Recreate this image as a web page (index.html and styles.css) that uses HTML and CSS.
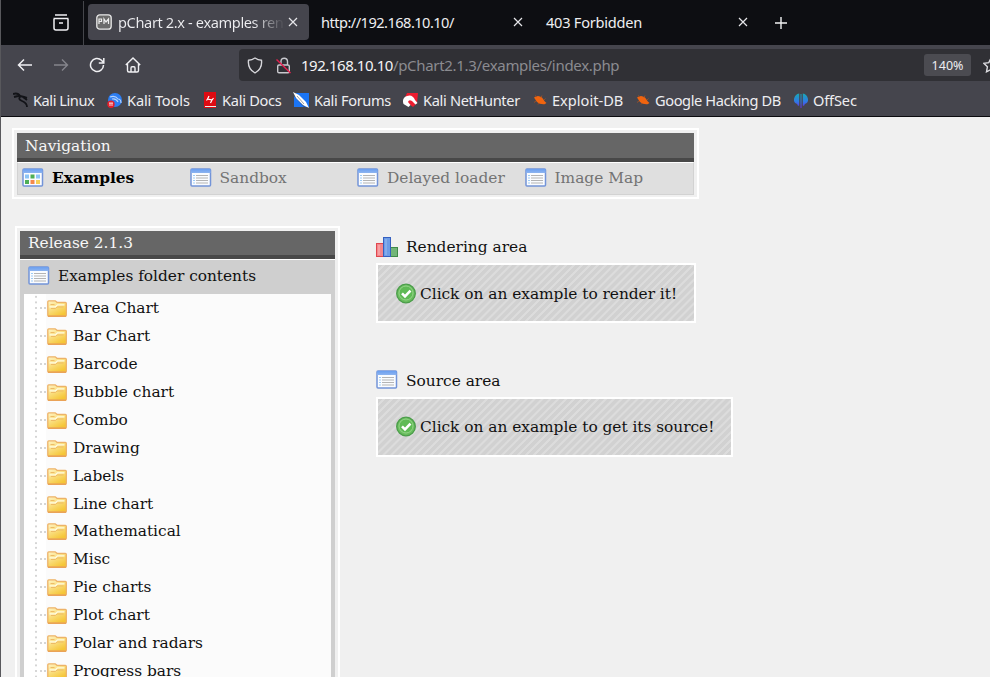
FILE: index.html
```html
<!DOCTYPE html>
<html lang="en">
<head>
<meta charset="utf-8">
<title>pChart 2.x - examples rendering</title>
<link rel="stylesheet" href="styles.css">
</head>
<body>
<svg class="defs" width="0" height="0">
  <linearGradient id="gold" x1="0" y1="0" x2="0.6" y2="1"><stop offset="0" stop-color="#fff6c8"/><stop offset="1" stop-color="#f5c636"/></linearGradient>
  <linearGradient id="brain" x1="0" y1="0" x2="0" y2="1"><stop offset="0" stop-color="#18a8b4"/><stop offset=".55" stop-color="#2f7be4"/><stop offset="1" stop-color="#6a2be8"/></linearGradient>
  <linearGradient id="blue" x1="0" y1="0" x2="0" y2="1"><stop offset="0" stop-color="#6b9ff0"/><stop offset="1" stop-color="#8db4f0"/></linearGradient>
  <symbol id="close" viewBox="0 0 10 10"><path d="M1 1l8 8M9 1l-8 8" stroke="#e6e6ea" stroke-width="1.2" fill="none"/></symbol>
  <symbol id="list" viewBox="0 0 22 20">
    <rect x="1" y="1" width="19.500" height="17" rx="1" fill="#fafcff" stroke="#7394d8" stroke-width="1.500"/>
    <rect x="1" y="1" width="19.500" height="4" fill="url(#blue)"/>
    <path d="M3 7.500h2M3 10h2M3 12.500h2M3 15h2" stroke="#9dcbf5" stroke-width="1.200"/>
    <path d="M6 7.500h12M6 10h12M6 12.500h12M6 15h12" stroke="#b4b4b4" stroke-width="1.200"/>
  </symbol>
  <symbol id="grid" viewBox="0 0 22 20">
    <rect x="1" y="1" width="19.500" height="17" rx="1" fill="#fafcff" stroke="#7394d8" stroke-width="1.500"/>
    <rect x="1" y="1" width="19.500" height="4" fill="url(#blue)"/>
    <rect x="3" y="6.500" width="4" height="4" fill="#8cc4f6"/><rect x="8.500" y="6.500" width="4" height="4" fill="#4fae55"/><rect x="14" y="6.500" width="4" height="4" fill="#8cc4f6"/>
    <rect x="3" y="12" width="4" height="4" fill="#4fae55"/><rect x="8.500" y="12" width="4" height="4" fill="#f58a4c"/><rect x="14" y="12" width="4" height="4" fill="#f6cf55"/>
  </symbol>
  <symbol id="folder" viewBox="0 0 20 17">
    <path d="M.8 1.800q0-1 1-1h6.400l1.800 1.500h8.400q.9 0 .9 1v11.900q0 1-1 1H1.800q-1 0-1-1z" fill="url(#gold)" stroke="#edb268" stroke-width="1.300"/>
    <path d="M2.500 6.800h6l2-2h7" fill="none" stroke="#fffbe4" stroke-width="1.300"/>
    <path d="M3.500 4.500h4M4 8.500h4.500l1.500-1.500h6.500" fill="none" stroke="#eebb66" stroke-width="1"/>
    <path d="M1 16.200h18" stroke="#e99c4d" stroke-width="1.200"/>
  </symbol>
  <symbol id="ok" viewBox="0 0 20 21">
    <circle cx="10" cy="10.500" r="9.300" fill="#69bd5d" stroke="#4b9d4a" stroke-width="1.300"/>
    <circle cx="10" cy="10" r="7" fill="#5fba55" stroke="#93d488" stroke-width="1"/>
    <path d="M6 10.300l3 3 5.500-5.600" fill="none" stroke="#fff" stroke-width="2.600"/>
  </symbol>
  <symbol id="bug" viewBox="0 0 16 16"><path d="M2 5.500q4-3 8 0l2.800 4 1.700 1.500-2 1.200q-5 .3-7.500-2.200z" fill="#f0640f"/><path d="M5 5L3 3.500M9 5.500l1-2M4 9l-2 1.500M7 11l-1 1.500M12 8l1.500-1.500" stroke="#a9501f" stroke-width=".8"/></symbol>
</svg>
<div class="window">
  <header class="tabs">
    <div class="recent"><svg width="18" height="17" viewBox="0 0 18 17" fill="none" stroke="#f0f0f3" stroke-width="1.500"><path d="M3 1h12M1.500 4.500h15M2 5v9q0 2 2 2h10q2 0 2-2V5M7 9h4"/></svg></div>
    <div class="tab active">
      <svg class="fav" width="16" height="16" viewBox="0 0 16 16"><rect x=".8" y=".8" width="14.400" height="14.400" rx="3" fill="#6b6b6b" stroke="#e8e8e8" stroke-width="1.300"/><path d="M3 10V5h2.500v2.500H3M8 10V5l2 3 2.500-3v5" fill="none" stroke="#eee" stroke-width="1.200"/></svg>
      <span class="fade">pChart 2.x - examples ren</span>
      <svg class="x" width="10" height="10"><use href="#close"/></svg>
    </div>
    <div class="tab"><span class="host">http://192.168.10.10/</span><svg class="x" width="10" height="10"><use href="#close"/></svg></div>
    <div class="tab"><span class="err">403 Forbidden</span><svg class="x" width="10" height="10"><use href="#close"/></svg></div>
    <svg class="plus" width="12" height="12" viewBox="0 0 12 12"><path d="M6 0v12M0 6h12" stroke="#f2f2f4" stroke-width="1.400"/></svg>
  </header>
  <div class="toolbar">
    <div class="buttons">
      <svg width="16" height="16" viewBox="0 0 16 16" fill="none" stroke="#f0f0f3" stroke-width="1.500"><path d="M15 8H2M7 2.500L1.500 8 7 13.500"/></svg>
      <svg width="16" height="16" viewBox="0 0 16 16" fill="none" stroke="#85858c" stroke-width="1.400"><path d="M1 8h13M9 2.500L14.500 8 9 13.500"/></svg>
      <svg width="16" height="16" viewBox="0 0 16 16" fill="none" stroke="#f0f0f3" stroke-width="1.500"><path d="M14.500 8A6.500 6.500 0 1 1 12.500 3.300L14 5M14.800 1v5h-5"/></svg>
      <svg width="16" height="16" viewBox="0 0 16 16" fill="none" stroke="#f0f0f3" stroke-width="1.400"><path d="M.8 8L8 1l7.200 7M2.500 7v6.500q0 1.500 1.500 1.500h8q1.500 0 1.500-1.500V7M6 15v-4q0-1.200 1-1.200h2q1 0 1 1.200v4"/></svg>
    </div>
    <div class="url">
      <svg width="16" height="17" viewBox="0 0 16 17" fill="none" stroke="#d6d6da" stroke-width="1.400"><path d="M8 1Q11 3 14.500 3.300 15.500 12 8 16 .5 12 1.500 3.300 5 3 8 1z"/></svg>
      <svg class="lock" width="15" height="17" viewBox="0 0 15 17" fill="none" stroke="#c9c9ce" stroke-width="1.400"><path d="M3 8h9q1.300 0 1.300 1.300v5.200q0 1.300-1.300 1.300H3q-1.300 0-1.300-1.300V9.300Q1.700 8 3 8zM5 8V4.500Q5 1.200 8.200 1.200T11.500 4.500V8"/><path d="M.5 2.500l14 13.500" stroke="#e3204f" stroke-width="1.500"/></svg>
      <span class="addr"><b>192.168.10.10</b>/pChart2.1.3/examples/index.php</span>
      <span class="zoom">140%</span>
      <svg class="star" width="16" height="16" viewBox="0 0 16 16" fill="none" stroke="#dcdce0" stroke-width="1.400"><path d="M8 1l2.200 4.600 5 .7-3.600 3.500.9 5L8 12.400l-4.500 2.400.9-5L.8 6.300l5-.7z"/></svg>
    </div>
  </div>
  <nav class="bookmarks">
    <a class="b1"><svg width="16" height="16" viewBox="0 0 16 16" fill="none" stroke="#121318"><path d="M0 2q5-1.500 7 2l4 1 3 1M1 5l6-1.500" stroke-width="2"/><path d="M8 4Q4 7 9 9t5 6M10 5l4 3" stroke-width="1.800"/></svg>Kali Linux</a>
    <a class="b2"><svg width="16" height="16" viewBox="0 0 16 16"><circle cx="8" cy="8" r="7" fill="#2d7ef2"/><path d="M3 5q5-2 8 2 3 0 3 4M5 7q4-1 6 3" fill="none" stroke="#b5d2fb" stroke-width="1.200"/><circle cx="4" cy="12.200" r="3.700" fill="#e21f2b"/><path d="M2 11h4M3 11v3M5 11v3" stroke="#fff" stroke-width=".8"/></svg>Kali Tools</a>
    <a class="b3"><svg width="14" height="16" viewBox="0 0 14 16"><path d="M1 0h12v16H1z" fill="#de0b12"/><path d="M2 14.500h11" stroke="#eee" stroke-width="1"/><path d="M6 4L4.500 7l4.500 1-1.500 3M4.500 7L3.500 8.500M9 8l1.500-2" fill="none" stroke="#fff" stroke-width="1.200"/></svg>Kali Docs</a>
    <a class="b4"><svg width="17" height="16" viewBox="0 0 17 16"><path d="M3 1h13v14h-4L3 6z" fill="#1b75f5"/><path d="M1 4v11h10z" fill="#1b75f5"/><path d="M0 0l6 3 7 7 3 6-6-3-7-7z" fill="#fff"/><path d="M4 4l7 8" stroke="#777" stroke-width=".7"/></svg>Kali Forums</a>
    <a class="b5"><svg width="16" height="16" viewBox="0 0 16 16"><path d="M5 1h11l-1 10-4 4-9-7z" fill="#ed1c2f"/><path d="M1.500 12Q-.5 6 5 4t8 4l2.500 3-2 1.500-3.500-3.500Q7 7 6 10l2.500 3-2 2z" fill="#fff"/></svg>Kali NetHunter</a>
    <a class="b6"><svg width="16" height="16"><use href="#bug"/></svg>Exploit-DB</a>
    <a class="b7"><svg width="16" height="16"><use href="#bug"/></svg>Google Hacking DB</a>
    <a class="b8"><svg width="16" height="16" viewBox="0 0 16 16"><path d="M6.200 1.500v12q-1.700 1-2-1.500Q.5 11 1 7 2 2 6.200 1.500zM9.800 1.500v12q1.700 1 2-1.500 3.700-1 3.200-5Q14 2 9.800 1.500zM7.500 2h1v14h-1z" fill="url(#brain)"/></svg>OffSec</a>
  </nav>
  <main class="page">
    <section class="navbox">
      <h2 class="low">Navigation</h2>
      <div class="menu">
        <a class="on"><svg width="22" height="20"><use href="#grid"/></svg>Examples</a>
        <a><svg width="22" height="20"><use href="#list"/></svg>Sandbox</a>
        <a><svg width="22" height="20"><use href="#list"/></svg>Delayed loader</a>
        <a><svg width="22" height="20"><use href="#list"/></svg>Image Map</a>
      </div>
    </section>
    <div class="columns">
      <section class="release">
        <h2>Release 2.1.3</h2>
        <div class="tree">
          <h3><svg width="22" height="20"><use href="#list"/></svg>Examples folder contents</h3>
          <ul>
            <li><svg width="20" height="17"><use href="#folder"/></svg>Area Chart</li>
            <li><svg width="20" height="17"><use href="#folder"/></svg>Bar Chart</li>
            <li><svg width="20" height="17"><use href="#folder"/></svg>Barcode</li>
            <li><svg width="20" height="17"><use href="#folder"/></svg>Bubble chart</li>
            <li><svg width="20" height="17"><use href="#folder"/></svg>Combo</li>
            <li><svg width="20" height="17"><use href="#folder"/></svg>Drawing</li>
            <li><svg width="20" height="17"><use href="#folder"/></svg>Labels</li>
            <li><svg width="20" height="17"><use href="#folder"/></svg>Line chart</li>
            <li><svg width="20" height="17"><use href="#folder"/></svg>Mathematical</li>
            <li><svg width="20" height="17"><use href="#folder"/></svg>Misc</li>
            <li><svg width="20" height="17"><use href="#folder"/></svg>Pie charts</li>
            <li><svg width="20" height="17"><use href="#folder"/></svg>Plot chart</li>
            <li><svg width="20" height="17"><use href="#folder"/></svg>Polar and radars</li>
            <li><svg width="20" height="17"><use href="#folder"/></svg>Progress bars</li>
          </ul>
        </div>
      </section>
      <div class="areas">
        <h4><svg width="22" height="20" viewBox="0 0 22 20"><rect x=".5" y="6.500" width="7" height="13" fill="#f4868b" stroke="#e0474f"/><path d="M3 8v10" stroke="#fbb8bb"/><rect x="14.500" y="10.500" width="7" height="9" fill="#72b578" stroke="#3f8a48"/><rect x="7.500" y=".5" width="7" height="19" fill="#6d9ce6" stroke="#3560c0"/><path d="M10 2v16" stroke="#9abdf2"/></svg>Rendering area</h4>
        <div class="note"><svg width="20" height="21"><use href="#ok"/></svg>Click on an example to render it!</div>
        <h4 class="source"><svg width="22" height="20"><use href="#list"/></svg>Source area</h4>
        <div class="note wide"><svg width="20" height="21"><use href="#ok"/></svg>Click on an example to get its source!</div>
      </div>
    </div>
  </main>
</div>
</body>
</html>
```
FILE: styles.css
```css
* { box-sizing: border-box; }
body { margin: 0; overflow: hidden; }
svg { flex: none; display: block; }
.defs { position: absolute; }
.window { width: 990px; height: 677px; overflow: hidden; border-left: 1px solid #58585c; background: #f0f0f0; font: 14.6px "Noto Sans", sans-serif; color: #eeeef1; white-space: nowrap; }
.tabs { height: 45px; background: #0d0e12; display: flex; align-items: center; }
.recent { width: 83px; height: 44px; border-right: 1px solid #45464b; padding: 13px 0 0 51px; }
.tab { width: 221px; height: 36px; margin: 0 0 1px 4px; padding: 0 11px 0 8px; border-radius: 4px; display: flex; align-items: center; }
.tab.active { background: #45454d; }
.fav { margin-right: 6px; }
.fade { letter-spacing: -.38px; background: linear-gradient(90deg, #eeeef1 135px, #55555c 163px); -webkit-background-clip: text; background-clip: text; color: transparent; }
.host { letter-spacing: -.53px; }
.err { letter-spacing: -.25px; }
.x { margin-left: auto; }
.plus { margin: 0 0 0 16px; }
.toolbar { height: 40px; background: #45454d; display: flex; align-items: flex-start; padding-top: 4px; }
.buttons { width: 238px; height: 32px; padding-left: 16px; display: flex; gap: 20px; align-items: center; }
.url { flex: 1; height: 32px; background: #303035; border-radius: 4px 0 0 4px; padding-left: 8px; display: flex; align-items: center; overflow: hidden; }
.lock { margin-left: 13px; }
.addr { margin-left: 10px; font-size: 15px; letter-spacing: -.31px; color: #8b8b90; }
.addr b { font-weight: 400; letter-spacing: -.46px; color: #f4f4f6; }
.zoom { margin-left: auto; width: 47px; height: 22px; border-radius: 3px; background: #4b4b51; font-size: 12.5px; line-height: 23px; text-align: center; }
.star { margin: 0 -9px 0 12px; }
.bookmarks { height: 32px; background: #45454d; border-bottom: 1px solid #0c0c10; display: flex; align-items: center; padding: 0 0 1px 12px; }
.bookmarks a { display: flex; align-items: center; gap: 4px; width: 94px; flex: none; }
.bookmarks .b1 { letter-spacing: -.45px; }
.bookmarks .b2 { width: 96px; letter-spacing: -.13px; }
.bookmarks .b3 { width: 90px; gap: 5px; letter-spacing: -.28px; }
.bookmarks .b4 { width: 109px; letter-spacing: -.33px; }
.bookmarks .b5 { width: 130px; gap: 5px; letter-spacing: -.33px; }
.bookmarks .b6 { width: 103px; }
.bookmarks .b7 { width: 158px; letter-spacing: -.4px; }
.bookmarks .b8 { letter-spacing: -.15px; }
.page { padding: 11px 0 0 11px; font: 15.4px "DejaVu Serif", serif; color: #111; }
h2, h3, h4, ul { margin: 0; padding: 0; font: inherit; }
.navbox { width: 687px; height: 71px; border: 2px solid #fff; padding: 3px; }
h2 { background: #666; color: #f7f7f7; border-bottom: 4px solid #484848; height: 29px; line-height: 25px; padding-left: 8px; }
.low { line-height: 27px; }
.menu { height: 33px; border: 1px solid #d2d2d2; border-top-color: #fff; background: #dfdfdf; display: flex; align-items: center; padding: 0 0 2px 4px; color: #737373; }
.menu a { width: 167.5px; display: flex; align-items: center; gap: 8px; }
.menu .on { font-weight: 700; color: #000; }
.columns { display: flex; padding: 27px 0 0 3px; }
.release { width: 325px; height: 480px; border: 2px solid #fff; padding: 3px 3px 0; }
.release h2 { height: 28px; }
.tree { background: #cfcfcf; border-top: 1px solid #fff; padding: 0 4px; height: 480px; }
h3 { height: 34px; display: flex; align-items: center; gap: 8px; padding: 0 0 2px 4px; letter-spacing: -.02px; }
ul { list-style: none; background: linear-gradient(90deg, #fff 22px, #fbfbfb 22px); }
li { height: 27.94px; display: flex; align-items: center; gap: 6px; padding-left: 23px; background: radial-gradient(circle, #d5d5d5 1px, transparent 1.4px) 10px 0 / 4px 5.6px repeat-y, radial-gradient(circle, #d5d5d5 .7px, transparent 1px) 15px 12px / 4px 4px no-repeat, radial-gradient(circle, #d5d5d5 .7px, transparent 1px) 19px 12px / 4px 4px no-repeat; }
li svg { margin-top: 1px; }
.areas { margin: 11px 0 0 36px; }
h4 { height: 20px; display: flex; align-items: center; gap: 8px; margin-bottom: 6px; }
.source svg { margin-bottom: 2px; }
.note { width: 320px; height: 60px; margin-bottom: 48px; border: 2px solid #fff; padding: 1px 0 0 18px; display: flex; align-items: center; gap: 4px; letter-spacing: -.03px; background: repeating-linear-gradient(135deg, #d1d1d1 0 2.8px, #dcdcdc 3.6px 5px, #d1d1d1 5.6px); }
.wide { width: 357px; padding: 0 0 1px 18px; }
```
